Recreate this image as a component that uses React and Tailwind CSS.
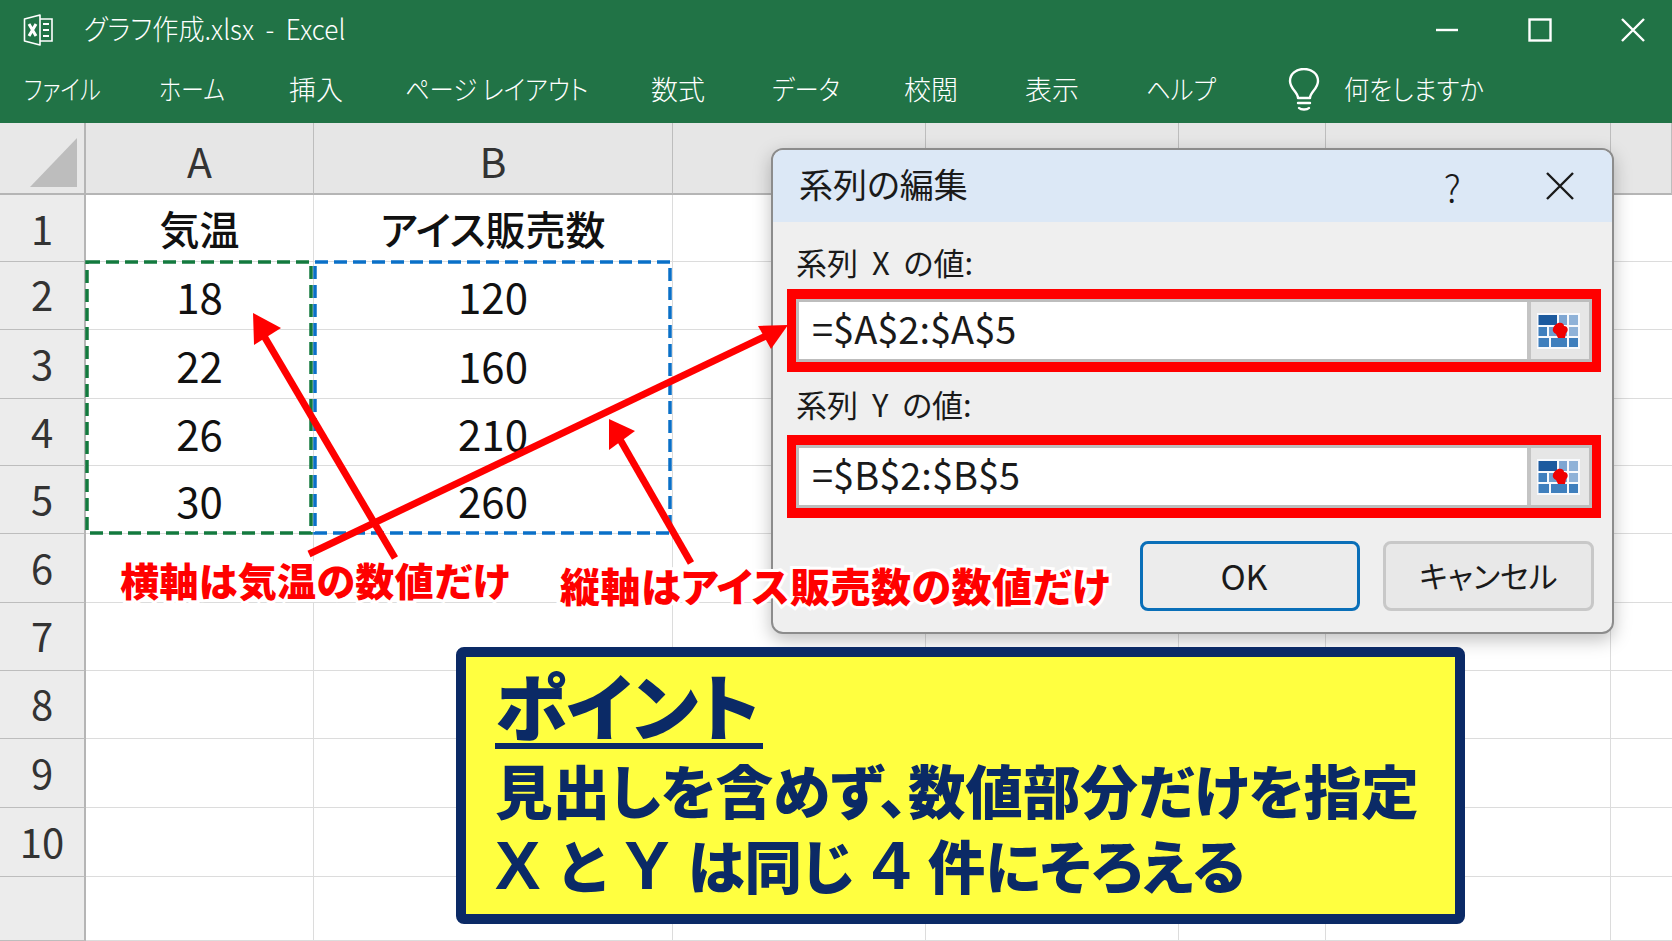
import React from 'react';

const menus = [
  { label: 'ファイル', w: 'w-[135px]', s: 'scale-x-[0.82]' },
  { label: 'ホーム', w: 'w-[130px]', s: 'scale-x-[0.85]' },
  { label: '挿入', w: 'w-[116px]', s: '' },
  { label: 'ページ レイアウト', w: 'w-[246px]', s: 'scale-x-[0.9]' },
  { label: '数式', w: 'w-[121px]', s: '' },
  { label: 'データ', w: 'w-[132px]', s: 'scale-x-[0.9]' },
  { label: '校閲', w: 'w-[121px]', s: '' },
  { label: '表示', w: 'w-[121px]', s: '' },
  { label: 'ヘルプ', w: 'w-[142px]', s: 'scale-x-[0.9]' },
];

const rows = [
  ['1', '気温', 'アイス販売数'],
  ['2', '18', '120'],
  ['3', '22', '160'],
  ['4', '26', '210'],
  ['5', '30', '260'],
  ['6', '', ''],
  ['7', '', ''],
  ['8', '', ''],
  ['9', '', ''],
  ['10', '', ''],
  ['', '', ''],
];

function ExcelIcon() {
  return (
    <svg width="30" height="32" viewBox="0 0 30 32" fill="none">
      <path d="M17 1 L1.5 5 V27 L17 31 V1 Z" stroke="white" strokeWidth="1.6" strokeLinejoin="round" fill="#217346" />
      <path d="M17 5 H29 V27 H17" stroke="white" strokeWidth="1.6" />
      <path d="M6 10 L13 22 M13 10 L6 22" stroke="white" strokeWidth="3" />
      <path d="M20 10 H26 M20 16 H26 M20 22 H26" stroke="white" strokeWidth="2" />
    </svg>
  );
}

function Bulb() {
  return (
    <svg width="32" height="44" viewBox="0 0 32 44" fill="none" stroke="white" strokeWidth="2.4">
      <path d="M10 30 C10 24 2 21 2 13 C2 6 8 1 16 1 C24 1 30 6 30 13 C30 21 22 24 22 30 Z" strokeLinejoin="round" />
      <path d="M10 35 H22 M11 40 C13 42 19 42 21 40" strokeLinecap="round" />
    </svg>
  );
}

function RangeIcon() {
  return (
    <svg width="43" height="36" viewBox="0 0 43 36">
      <rect width="43" height="36" fill="#f7f9fc" />
      <rect x="1.5" y="2" width="18.5" height="10" fill="#1c5a9e" />
      <rect x="22" y="2" width="8" height="10" fill="#7ea6d2" />
      <rect x="32" y="2" width="9" height="10" fill="#8fb2d8" />
      <rect x="1.5" y="14" width="8.5" height="9" fill="#3f7fbd" />
      <rect x="12" y="14" width="8" height="9" fill="#6f9fce" />
      <rect x="22" y="14" width="8" height="9" fill="#7ea6d2" />
      <rect x="32" y="14" width="9" height="9" fill="#8fb2d8" />
      <rect x="1.5" y="25" width="10.5" height="9" fill="#3f7fbd" />
      <rect x="14" y="25" width="16" height="9" fill="#3f7fbd" />
      <rect x="32" y="25" width="9" height="9" fill="#3f7fbd" />
      <path d="M21 10 C25 9 27 11 27 13 C31 13 32 18 29 20 L28 25 L21 25 L19 21 C14 19 15 13 21 10 Z" fill="#f00000" />
    </svg>
  );
}

function RefField({ value }) {
  return (
    <div className="mx-[14px] h-[83px] w-[814px] border-x-[9px] border-y-[10px] border-[#ff0000]">
      <div className="flex h-full border-[3px] border-[#bdbdbd] bg-[#e6e6e6]">
        <div className="flex flex-1 items-center bg-white pb-[6px] pl-[13px] text-[38px] text-[#1a1a1a]">{value}</div>
        <div className="flex w-[62px] items-center justify-center border-l-[4px] border-[#c4c4c4] pr-[3px]">
          <RangeIcon />
        </div>
      </div>
    </div>
  );
}

export default function App() {
  return (
    <div className="relative h-[941px] w-[1672px] overflow-hidden bg-white font-['Noto_Sans_CJK_JP',sans-serif] [font-feature-settings:'palt']">
      {/* title bar */}
      <div className="h-[123px] bg-[#217346] text-white">
        <div className="flex h-[60px] items-center pl-[23px]">
          <ExcelIcon />
          <span className="ml-[31px] origin-left scale-x-[0.935] whitespace-pre pb-[4px] text-[28px] font-light">グラフ作成.xlsx  -  Excel</span>
          <div className="ml-auto flex items-center">
            <svg width="24" height="24" viewBox="0 0 24 24" stroke="white" strokeWidth="2.4" fill="none">
              <path d="M1 12 H23" />
            </svg>
            <svg className="ml-[69px]" width="24" height="24" viewBox="0 0 24 24" stroke="white" strokeWidth="2.4" fill="none">
              <rect x="1.5" y="1.5" width="21" height="21" />
            </svg>
            <svg className="ml-[69px] mr-[27px]" width="24" height="24" viewBox="0 0 24 24" stroke="white" strokeWidth="2.4" fill="none">
              <path d="M1 1 L23 23 M23 1 L1 23" />
            </svg>
          </div>
        </div>
        <div className="flex h-[63px] items-center pb-[4px] pl-[24px] text-[27px]">
          {menus.map((m) => (
            <div key={m.label} className={`${m.w} shrink-0 whitespace-nowrap`}>
              <div className={`${m.s} w-fit origin-left font-light`}>{m.label}</div>
            </div>
          ))}
          <div className="flex items-center gap-[24px]">
            <Bulb />
            <span className="origin-left scale-x-[0.93] font-light">何をしますか</span>
          </div>
        </div>
      </div>

      {/* sheet */}
      <div className="grid grid-cols-[86px_228px_359px_253px_253px_147px_285px_61px] grid-rows-[72px_67px_68px_69px_67px_68px_69px_68px_68px_69px_69px_64px] text-[#111111]">
        <div className="flex items-end justify-end border-r-2 border-b-2 border-[#b5b5b5] bg-[#e8e8e8] pb-[6px] pr-[7px]">
          <div className="h-[49px] w-[47px] bg-[#bdbdbd] [clip-path:polygon(100%_0,100%_100%,0_100%)]" />
        </div>
        {['A', 'B', '', '', '', '', ''].map((h, i) => (
          <div key={i} className="flex items-center justify-center border-r border-b-2 border-r-[#bdbdbd] border-b-[#b5b5b5] bg-[#e6e6e6] pt-[5px] text-[41px] text-[#333333]">
            {h}
          </div>
        ))}
        {rows.map((r, i) => (
          <React.Fragment key={i}>
            <div className={`flex items-center justify-center border-r-2 border-b border-r-[#b5b5b5] border-b-[#bdbdbd] bg-[#ececec] text-[40px] text-[#333333] ${i === 0 ? '' : 'pb-[3px]'}`}>
              {r[0]}
            </div>
            <div className={`flex items-center justify-center border-r border-b border-[#dcdcdc] ${i === 0 ? 'text-[40px] font-medium' : 'text-[42px]'}`}>
              {r[1]}
            </div>
            <div className={`flex items-center justify-center border-r border-b border-[#dcdcdc] ${i === 0 ? 'text-[40px] font-medium' : 'text-[42px]'}`}>
              {r[2]}
            </div>
            <div className="border-r border-b border-[#dcdcdc]" />
            <div className="border-r border-b border-[#dcdcdc]" />
            <div className="border-r border-b border-[#dcdcdc]" />
            <div className="border-r border-b border-[#dcdcdc]" />
            <div className="border-b border-[#dcdcdc]" />
          </React.Fragment>
        ))}
      </div>

      {/* selection dashes */}
      <svg className="absolute left-0 top-0" width="1672" height="941" fill="none">
        <rect x="87" y="262" width="224" height="271" stroke="#137a3e" strokeWidth="3.5" strokeDasharray="13 6" />
        <rect x="315" y="262" width="355" height="271" stroke="#0a70c8" strokeWidth="3.5" strokeDasharray="13 6" />
      </svg>

      {/* dialog */}
      <div className="absolute left-[771px] top-[148px] h-[486px] w-[843px] overflow-hidden rounded-[12px] border-2 border-[#8c8c8c] bg-[#efefef] shadow-[0_6px_18px_rgba(0,0,0,0.25)]">
        <div className="flex h-[72px] items-center bg-[#dce8f6] pl-[26px] pr-[38px] text-[#1a1a1a]">
          <span className="pb-[5px] text-[34px]">系列の編集</span>
          <span className="ml-auto text-[38px] font-light">?</span>
          <svg className="ml-[85px]" width="28" height="28" viewBox="0 0 28 28" stroke="#1a1a1a" strokeWidth="2.4" fill="none">
            <path d="M1 1 L27 27 M27 1 L1 27" />
          </svg>
        </div>
        <div className="flex h-[67px] items-center whitespace-pre pb-[1px] pl-[23px] pt-[14px] text-[31px] text-[#1a1a1a]">系列  X  の値:</div>
        <RefField value="=$A$2:$A$5" />
        <div className="flex h-[63px] items-center whitespace-pre pl-[23px] pt-[2px] text-[31px] text-[#1a1a1a]">系列  Y  の値:</div>
        <RefField value="=$B$2:$B$5" />
        <div className="mt-[23px] flex justify-end gap-[23px] pr-[18px] text-[#1a1a1a]">
          <div className="flex h-[70px] w-[220px] items-center justify-center rounded-[8px] border-[3px] border-[#0a6fb8] bg-[#ececec] pb-[2px] pr-[12px] text-[34px]">OK</div>
          <div className="flex h-[70px] w-[211px] items-center justify-center rounded-[8px] border-[3px] border-[#c8c8c8] bg-[#e8e8e8] text-[30.5px]">キャンセル</div>
        </div>
      </div>

      {/* arrows */}
      <svg className="absolute left-0 top-0" width="1672" height="941" fill="#ff0000" stroke="#ff0000">
        <line x1="395" y1="558" x2="264" y2="336" strokeWidth="7" />
        <polygon points="253,313 281,328 254,345" strokeWidth="0" />
        <line x1="309" y1="554" x2="770" y2="334" strokeWidth="7" />
        <polygon points="788,325 771,349 758,326" strokeWidth="0" />
        <line x1="691" y1="563" x2="618" y2="436" strokeWidth="7" />
        <polygon points="609,419 635,431 609,450" strokeWidth="0" />
      </svg>

      {/* red notes */}
      <div className="absolute left-[120px] top-[551px] whitespace-nowrap text-[39px] font-black leading-[56px] tracking-[0.4px] text-[#ff0000] [-webkit-text-stroke:6px_white] [paint-order:stroke_fill]">
        横軸は気温の数値だけ
      </div>
      <div className="absolute left-[560px] top-[557px] whitespace-nowrap text-[40px] font-black leading-[56px] tracking-[0.5px] text-[#ff0000] [-webkit-text-stroke:6px_white] [paint-order:stroke_fill]">
        縦軸はアイス販売数の数値だけ
      </div>

      {/* point box */}
      <div className="absolute left-[456px] top-[647px] h-[277px] w-[1009px] rounded-[8px] border-[10px] border-[#0b2a66] bg-[#ffff40] pl-[29px] font-black text-[#0b2a66]">
        <div className="mt-[6px] w-fit border-b-[6px] border-[#0b2a66] pr-[4px] text-[73px] leading-[80px]">ポイント</div>
        <div className="mt-[4px] whitespace-nowrap text-[57.5px] leading-[72px]">見出しを含めず、数値部分だけを指定</div>
        <div className="mt-[3px] flex items-baseline gap-[18px] whitespace-nowrap text-[57.5px] leading-[72px]">
          <span className="font-['Liberation_Sans',sans-serif] text-[68px] font-bold">X</span>
          <span>と</span>
          <span className="font-['Liberation_Sans',sans-serif] text-[68px] font-bold">Y</span>
          <span>は同じ</span>
          <span className="font-['Liberation_Sans',sans-serif] text-[68px] font-bold">4</span>
          <span>件にそろえる</span>
        </div>
      </div>
    </div>
  );
}
